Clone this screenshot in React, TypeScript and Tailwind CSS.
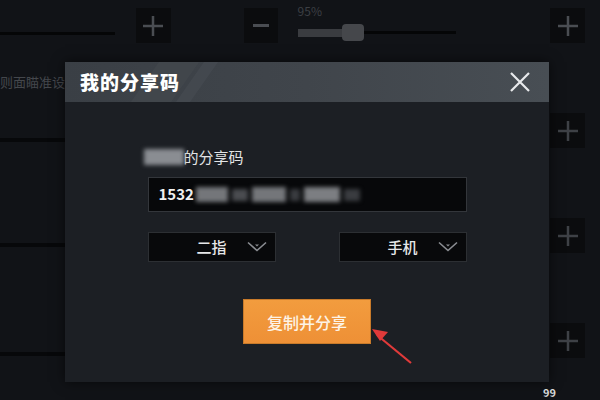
import React from 'react';

const font = { fontFamily: '"Noto Sans CJK SC", "Noto Sans", sans-serif' };

function PlusBox({ dim = false }: { dim?: boolean }) {
  return (
    <div className="flex h-[35px] w-[35px] items-center justify-center bg-[#0b0c0e]">
      <svg width="22" height="22" viewBox="0 0 22 22" stroke={dim ? '#3e4146' : '#4a4d52'} strokeWidth="2.5">
        <path d="M11 1v20M1 11h20" />
      </svg>
    </div>
  );
}

function Chevron() {
  return (
    <svg width="20" height="12" viewBox="0 0 20 12" fill="none" stroke="#8a8d92" strokeWidth="1.6">
      <path d="M1 1.5l9 8 9-8" />
      <path d="M8 3.5h4l-2 2z" fill="#8a8d92" stroke="none" />
    </svg>
  );
}

export default function App() {
  return (
    <div className="relative h-[400px] w-[600px] overflow-hidden bg-[#111317] text-white" style={font}>
      {/* background settings screen */}
      <div className="flex h-full flex-col">
        <div className="flex h-[50px] items-start pt-2">
          <div className="mt-[24px] h-[3px] w-[118px] bg-[#050607]" />
          <div className="ml-[21px]"><PlusBox /></div>
          <div className="ml-[73px] flex h-[35px] w-[35px] items-center justify-center bg-[#0b0c0e]">
            <div className="h-[3px] w-[16px] bg-[#4a4d52]" />
          </div>
          <div className="ml-[20px] flex w-[260px] flex-col">
            <span className="-mt-[4px] text-[12px] leading-[14px] text-[#3c3f44]">95%</span>
            <div className="mt-[6px] flex items-center">
              <div className="h-[8px] w-[44px] bg-[#3a3c40]" />
              <div className="h-[17px] w-[22px] rounded-[4px] bg-[#45474b]" />
              <div className="h-[3px] w-[92px] bg-[#050607]" />
            </div>
          </div>
          <div className="ml-auto mr-[15px]"><PlusBox /></div>
        </div>
        <div className="flex flex-1">
          <div className="flex w-[65px] flex-col">
            <span className="mt-[24px] whitespace-nowrap text-[13px] leading-[16px] text-[#44474c]">则面瞄准设</span>
            <div className="mt-[48px] h-[4px] bg-[#07080a]" />
            <div className="mt-[101px] h-[4px] bg-[#07080a]" />
            <div className="mt-[105px] h-[4px] bg-[#07080a]" />
          </div>
          <div className="flex-1" />
          <div className="mr-[15px] flex flex-col gap-[70px] pt-[63px]">
            <PlusBox dim />
            <PlusBox dim />
            <PlusBox dim />
          </div>
        </div>
      </div>

      {/* dialog */}
      <div className="absolute left-[65px] top-[62px] flex h-[320px] w-[484px] flex-col bg-[#1c1f24] shadow-[0_0_12px_rgba(0,0,0,0.6)]">
        <div className="relative flex h-[40px] items-center justify-between overflow-hidden bg-gradient-to-r from-[#3a3f45] via-[#40454b] to-[#484e54] pl-[15px] pr-[18px]">
          <div className="absolute left-[80px] top-0 h-full w-[40px] -skew-x-[35deg] bg-[#44494f]/60" />
          <div className="absolute left-[125px] top-0 h-full w-[14px] -skew-x-[35deg] bg-[#484d53]/60" />
          <span className="relative text-[19px] font-black tracking-[1px]">我的分享码</span>
          <svg width="22" height="22" viewBox="0 0 22 22" stroke="#e8eaec" strokeWidth="2.2">
            <path d="M2 2l18 18M20 2L2 20" />
          </svg>
        </div>
        <div className="flex flex-col items-center pt-[46px]">
          <div className="flex w-[319px] flex-col">
            <div className="flex items-center">
              <div className="-ml-[4px] h-[16px] w-[40px] bg-[#8a8d92] blur-[2px]" />
              <span className="text-[15px] leading-[18px] text-[#e2e4e6]">的分享码</span>
            </div>
            <div className="mt-[11px] flex h-[35px] items-center border border-[#33363b] bg-[#07080a] pl-[10px]">
              <span className="text-[15px] font-bold text-[#f0f0f0]">1532</span>
              <div className="ml-[2px] flex items-center gap-[4px] blur-[2px]">
                <div className="h-[15px] w-[32px] bg-[#74767a]" />
                <div className="h-[12px] w-[16px] bg-[#4a4c50]" />
                <div className="h-[15px] w-[34px] bg-[#74767a]" />
                <div className="h-[12px] w-[10px] bg-[#3a3c40]" />
                <div className="h-[15px] w-[36px] bg-[#7c7e82]" />
                <div className="h-[12px] w-[16px] bg-[#3a3c40]" />
              </div>
            </div>
            <div className="mt-[20px] flex justify-between">
              <div className="flex h-[30px] w-[128px] items-center justify-end gap-[20px] border border-[#2c2f33] bg-[#08090b] pr-[8px]">
                <span className="text-[15px] font-medium text-[#e6e7e9]">二指</span>
                <Chevron />
              </div>
              <div className="flex h-[30px] w-[128px] items-center justify-end gap-[20px] border border-[#2c2f33] bg-[#08090b] pr-[8px]">
                <span className="text-[15px] font-medium text-[#e6e7e9]">手机</span>
                <Chevron />
              </div>
            </div>
          </div>
          <button className="relative mt-[37px] flex h-[45px] w-[128px] items-center justify-center border border-[#c87a2a] bg-gradient-to-b from-[#f29c3e] to-[#ee9036] text-[16px] font-medium text-[#fdf3e6]">
            复制并分享
          </button>
        </div>
      </div>

      {/* red annotation arrow */}
      <svg className="absolute left-[365px] top-[320px]" width="50" height="46" viewBox="0 0 50 46">
        <path d="M46 43L12 15" stroke="#e03a3a" strokeWidth="2.2" fill="none" />
        <path d="M7 9l16 3-8 9z" fill="#e03a3a" />
      </svg>

      <span className="absolute left-[543px] top-[386px] text-[11px] leading-[12px] font-bold text-[#d8d8d8]">99</span>
    </div>
  );
}
